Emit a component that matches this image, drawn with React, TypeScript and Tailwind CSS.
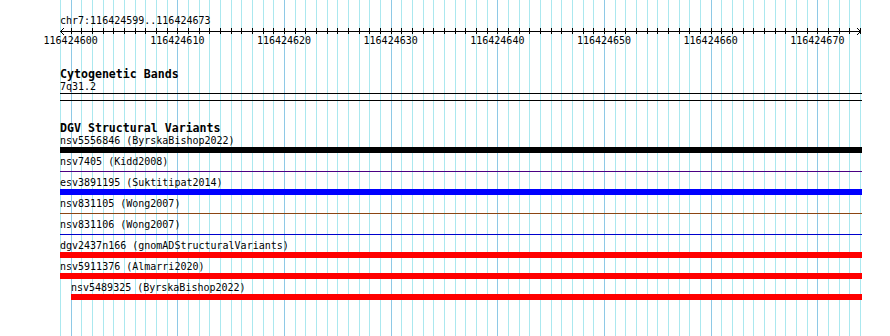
import React from "react";

const LEFT = 60;
const BP = 32 / 3;
const NLINES = 76;

const gridX = (k: number) => Math.round(LEFT + k * BP);

type Feat = { label: string; color: string; kind: "bar" | "line"; offset?: number };

const feats: Feat[] = [
  { label: "nsv5556846 (ByrskaBishop2022)", color: "#000000", kind: "bar" },
  { label: "nsv7405 (Kidd2008)", color: "#4b0082", kind: "line" },
  { label: "esv3891195 (Suktitipat2014)", color: "#0000ff", kind: "bar" },
  { label: "nsv831105 (Wong2007)", color: "#8b4513", kind: "line" },
  { label: "nsv831106 (Wong2007)", color: "#0000cd", kind: "line" },
  { label: "dgv2437n166 (gnomADStructuralVariants)", color: "#ff0000", kind: "bar" },
  { label: "nsv5911376 (Almarri2020)", color: "#ff0000", kind: "bar" },
  { label: "nsv5489325 (ByrskaBishop2022)", color: "#ff0000", kind: "bar", offset: 11 },
];

function Grid() {
  const lines = [];
  for (let k = 0; k < NLINES; k++) {
    const major = (k - 1) % 10 === 0;
    lines.push(
      <rect key={k} x={gridX(k)} y={0} width={1} height={336} fill={major ? "#8ec9e6" : "#abe8ef"} />
    );
  }
  const ticks = [];
  for (let k = 1; k < NLINES; k++) {
    ticks.push(<rect key={k} x={gridX(k)} y={28} width={1} height={6} fill="#000" />);
  }
  const labels = [];
  for (let i = 0; i < 8; i++) {
    const k = 1 + i * 10;
    labels.push(
      <text
        key={i}
        x={LEFT + k * BP}
        y={43.5}
        textAnchor="middle"
        fontFamily="'DejaVu Sans Mono', monospace"
        fontSize={10}
        fill="#000"
      >
        {116424600 + i * 10}
      </text>
    );
  }
  return (
    <svg className="absolute inset-0" width={890} height={336}>
      {lines}
      <rect x={60} y={31} width={801} height={1} fill="#000" />
      {ticks}
      <path d="M64 28 L60.5 31.5 L64 35" stroke="#000" strokeWidth={1} fill="none" />
      <path d="M857 28 L860.5 31.5 L857 35" stroke="#000" strokeWidth={1} fill="none" />
      {labels}
    </svg>
  );
}

export default function App() {
  return (
    <div
      className="relative w-[890px] h-[336px] overflow-hidden bg-white text-black text-[10px] leading-[12px]"
      style={{ fontFamily: "'DejaVu Sans Mono', 'Liberation Mono', monospace" }}
    >
      <Grid />
      <div className="relative flex flex-col pl-[60px] w-[862px]">
        <div className="mt-[15px] h-[12px]">chr7:116424599..116424673</div>
        <div className="mt-[41px] h-[12px] font-bold text-[11.6px] leading-[12px]">Cytogenetic Bands</div>
        <div className="mt-[1px] h-[12px]">7q31.2</div>
        <div className="h-px bg-black" />
        <div className="mt-[6px] h-px bg-black" />
        <div className="mt-[21px] h-[12px] font-bold text-[11.6px] leading-[12px]">DGV Structural Variants</div>
        <div className="mt-[1px] flex flex-col gap-[3px]">
          {feats.map((f) => (
            <div key={f.label} className={f.offset ? "ml-[11px] flex flex-col" : "flex flex-col"}>
              <div className="h-[12px] whitespace-nowrap">{f.label}</div>
              <div className="h-[6px] flex flex-col justify-center">
                {f.kind === "bar" ? (
                  <div className="h-[6px]" style={{ background: f.color }} />
                ) : (
                  <div className="h-px" style={{ background: f.color }} />
                )}
              </div>
            </div>
          ))}
        </div>
      </div>
    </div>
  );
}
